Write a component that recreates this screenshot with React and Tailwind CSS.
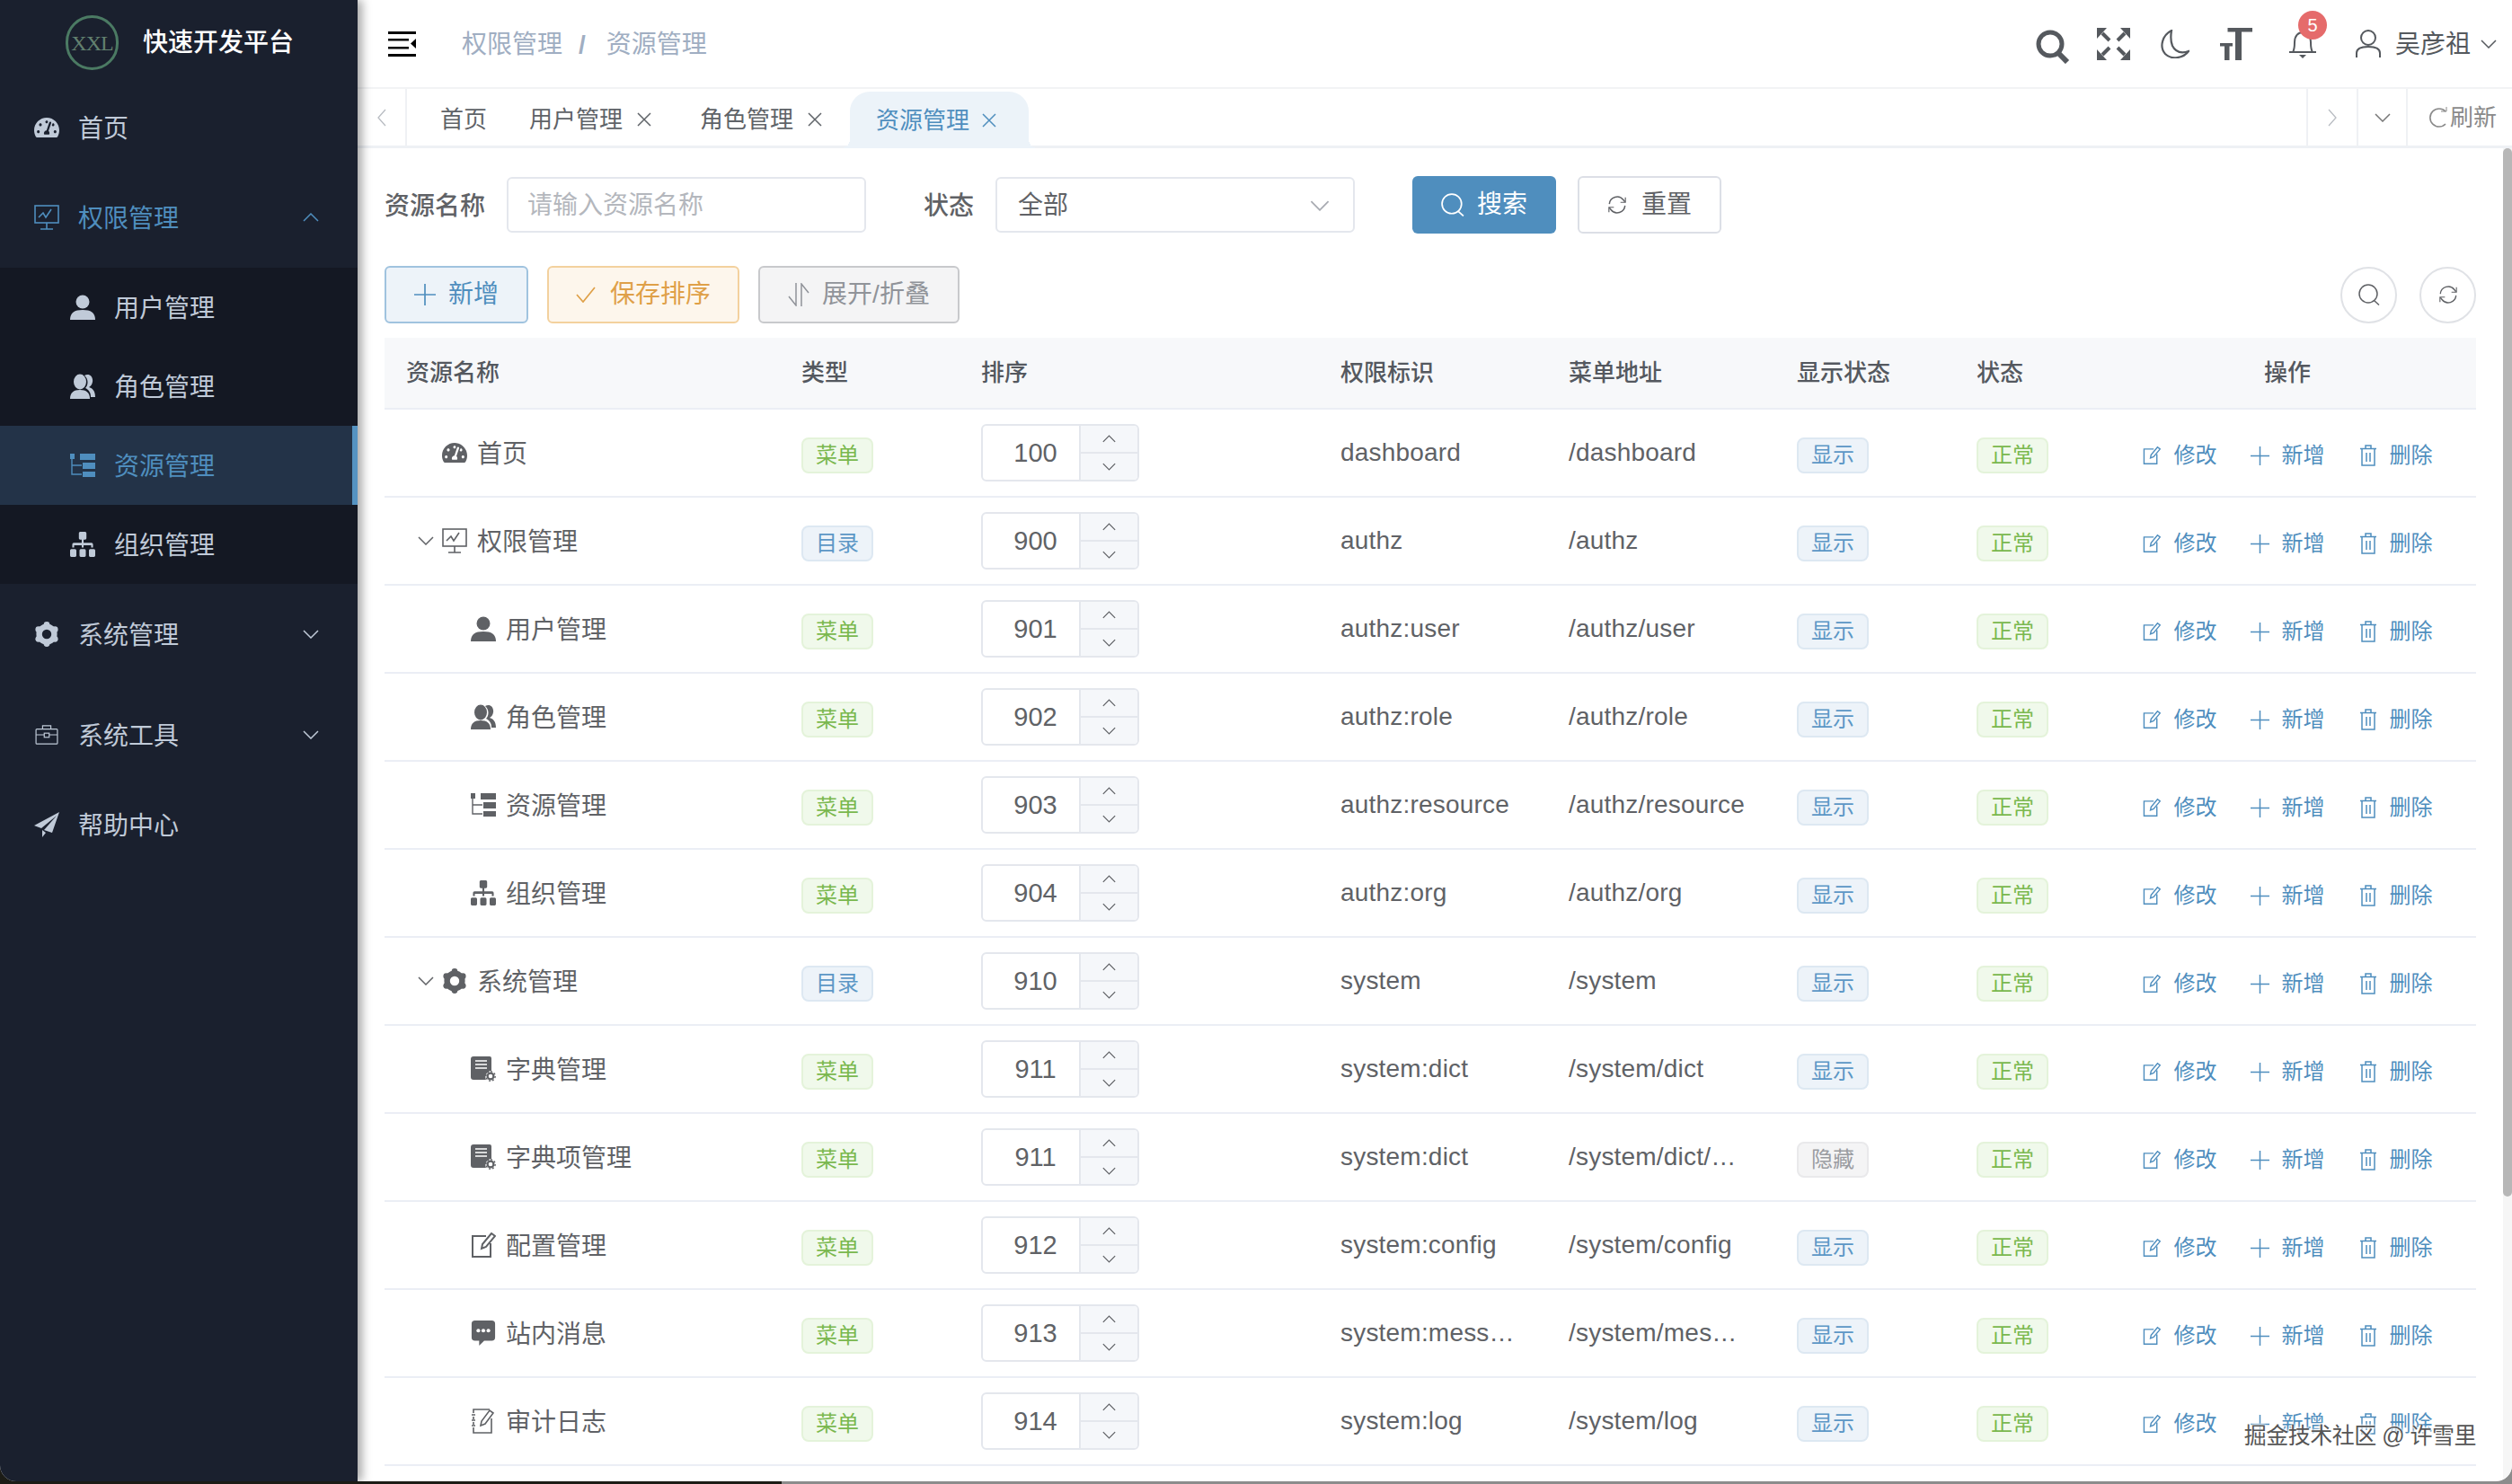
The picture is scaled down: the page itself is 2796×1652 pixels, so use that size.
import React from "react";
import { FaTachometerAlt, FaSitemap } from "react-icons/fa";

const Chevron = ({ dir = "down", className = "w-[18px] h-[10px]" }) => (
  <svg viewBox="0 0 18 10" className={className} fill="none" stroke="currentColor" strokeWidth="1.5">
    {dir === "down" ? <path d="M1 1l8 8 8-8" /> : <path d="M1 9l8-8 8 8" />}
  </svg>
);
const ChevronSide = ({ dir }) => (
  <svg viewBox="0 0 10 20" className="w-[10px] h-[20px]" fill="none" stroke="currentColor" strokeWidth="1.3">
    {dir === "left" ? <path d="M9 1L1 10l8 9" /> : <path d="M1 1l8 9-8 9" />}
  </svg>
);
const XIcon = () => (
  <svg viewBox="0 0 16 16" className="w-[16px] h-[16px]" fill="none" stroke="currentColor" strokeWidth="1.5"><path d="M1 1l14 14M15 1L1 15" /></svg>
);
const Gauge = ({ className }) => <FaTachometerAlt className={className} />;
const UserSolid = ({ className }) => (
  <svg viewBox="0 0 28 28" className={className} fill="currentColor"><circle cx="14" cy="8" r="7.5" /><path d="M0 28c0-8 5-11 14-11s14 3 14 11z" /></svg>
);
const UsersSolid = ({ className }) => (
  <svg viewBox="0 0 28 28" className={className} fill="currentColor">
    <path d="M16 2c5-3 10 1 9 7-.4 3-2 5-4 6 3 1 7 3 7 11h-5c0-5-2-8-6-10 3-3 4-10-1-14z" />
    <ellipse cx="11" cy="9" rx="7" ry="8.5" /><path d="M0 28c0-7 4-10 11-10s11 3 11 10z" />
  </svg>
);
const TreeIcon = ({ className }) => (
  <svg viewBox="0 0 28 26" className={className} fill="currentColor">
    <rect x="0" y="0" width="5" height="6" /><rect x="11" y="0" width="17" height="7" />
    <rect x="14" y="10" width="14" height="7" /><rect x="14" y="20" width="14" height="6" />
    <path d="M2 6v17h11M2 13h11" fill="none" stroke="currentColor" strokeWidth="1.4" />
  </svg>
);
const Sitemap = ({ className }) => <FaSitemap className={className} preserveAspectRatio="none" />;
const MonitorIcon = ({ className }) => (
  <svg viewBox="0 0 28 28" className={className} fill="none" stroke="currentColor" strokeWidth="1.6">
    <rect x="1" y="1" width="26" height="19" /><path d="M5 14l5-5 3 5 6-9M14 20v7M7 27h14" />
  </svg>
);
const GearIcon = ({ className }) => (
  <svg viewBox="0 0 28 28" className={className} fill="currentColor">
    <circle cx="14" cy="14" r="8.4" fill="none" stroke="currentColor" strokeWidth="6.4" />
    {[0, 60, 120, 180, 240, 300].map((a) => (
      <circle key={a} r="3.4" cx={14 + 10.6 * Math.sin((a * Math.PI) / 180)} cy={14 - 10.6 * Math.cos((a * Math.PI) / 180)} />
    ))}
  </svg>
);
const BriefcaseIcon = ({ className }) => (
  <svg viewBox="0 0 28 24" className={className} fill="none" stroke="currentColor" strokeWidth="1.3">
    <rect x="1" y="5" width="26" height="18" rx="1" /><path d="M9 5V1h10v4M1 12h10M17 12h10" /><rect x="11" y="10" width="6" height="5" />
  </svg>
);
const PlaneIcon = ({ className }) => (
  <svg viewBox="0 0 28 28" className={className} fill="currentColor">
    <path d="M28 0L0 15l8 3L25 4 11 20l9 3zM9 20v8l4-5z" />
  </svg>
);
const DictIcon = ({ className }) => (
  <svg viewBox="0 0 28 28" className={className}>
    <path d="M3 0h18a2 2 0 012 2v14a7 7 0 00-6 10H3a3 3 0 01-3-3V3a3 3 0 013-3z" fill="currentColor" />
    <path d="M5 5h13M5 9h13M5 13h13" stroke="#fff" strokeWidth="1.6" />
    <circle cx="22" cy="22" r="3.4" fill="none" stroke="currentColor" strokeWidth="2.2" />
    <circle cx="22" cy="22" r="5.2" fill="none" stroke="currentColor" strokeWidth="1.4" strokeDasharray="2 2" />
  </svg>
);
const EditIcon = ({ className, sw = 2 }) => (
  <svg viewBox="0 0 28 28" className={className} fill="none" stroke="currentColor" strokeWidth={sw}>
    <path d="M17 4H2v23h20V12" /><path d="M12 18l1-5L23 1l4 3-10 12z" />
  </svg>
);
const CommentIcon = ({ className }) => (
  <svg viewBox="0 0 28 30" className={className}>
    <path d="M4 0h20a4 4 0 014 4v16a4 4 0 01-4 4H15l-6 6v-6H4a4 4 0 01-4-4V4a4 4 0 014-4z" fill="currentColor" />
    <circle cx="8" cy="12" r="2.2" fill="#fff" /><circle cx="14" cy="12" r="2.2" fill="#fff" /><circle cx="20" cy="12" r="2.2" fill="#fff" />
  </svg>
);
const LogIcon = ({ className }) => (
  <svg viewBox="0 0 28 28" className={className} fill="none" stroke="currentColor" strokeWidth="1.6">
    <path d="M3 5V1h18M3 9v3M3 15v3M3 21v6h20V11M1 7h4M1 13h4M1 19h4" /><path d="M11 19l1-5L21 2l4 3-9 12z" />
  </svg>
);
const TrashIcon = ({ className }) => (
  <svg viewBox="0 0 20 24" className={className} fill="none" stroke="currentColor" strokeWidth="1.5">
    <path d="M1 4.500h18M7 4V1h6v3M3 5v18h14V5M8 9v10M12 9v10" />
  </svg>
);
const PlusIcon = ({ className }) => (
  <svg viewBox="0 0 24 24" className={className} fill="none" stroke="currentColor" strokeWidth="1.7"><path d="M12 0v24M0 12h24" /></svg>
);
const SearchThin = ({ className, sw = 1.6 }) => (
  <svg viewBox="0 0 24 24" className={className} fill="none" stroke="currentColor" strokeWidth={sw}>
    <circle cx="11" cy="11" r="10" /><path d="M17.500 18.500L23 23.500" />
  </svg>
);
const RefreshIcon = ({ className, sw = 1.6 }) => (
  <svg viewBox="0 0 24 24" className={className} fill="none" stroke="currentColor" strokeWidth={sw}>
    <path d="M2.500 11a9.500 9.500 0 0117-5l2 2.500M21.500 13a9.500 9.500 0 01-17 5l-2-2.500" />
    <path d="M16 9h6V3M8 15H2v6" strokeWidth={sw * 0.8} />
  </svg>
);
const Hamburger = () => (
  <svg viewBox="0 0 31 28" className="w-[31px] h-[28px]" fill="#000">
    <rect width="31" height="3" /><rect y="8" width="23" height="2.500" /><rect y="17" width="23" height="2.500" /><rect y="25" width="31" height="3" />
    <path d="M31 8v11l-6-5.500z" />
  </svg>
);
const FullIcon = () => (
  <svg viewBox="0 0 37 36" className="w-[37px] h-[36px]" fill="#55595e">
    <path d="M0 0h11L0 12zM37 0H26l11 12zM0 36h11L0 24zM37 36H26l11-12z" />
    <path d="M6 6l8 8M31 6l-8 8M6 30l8-8M31 30l-8-8" stroke="#55595e" strokeWidth="4" />
  </svg>
);
const TextSize = () => (
  <svg viewBox="0 0 36 36" className="w-[36px] h-[36px]" fill="#55595e">
    <rect x="8.500" width="27.500" height="4.500" /><rect x="17" width="7" height="36" /><rect y="17" width="14" height="3.500" /><rect x="5" y="17" width="5.500" height="19" />
  </svg>
);

function SideItem({ icon, label, active, h = "h-[88px]", chevron }) {
  return (
    <div className={`flex items-center pl-[38px] pr-[43px] ${h} ${active ? "text-[#4f8ebe]" : "text-[#c0cad8]"}`}>
      <span className="w-[28px] flex justify-center">{icon}</span>
      <span className="ml-[21px] pt-[4px] text-[28px] leading-none">{label}</span>
      {chevron && <span className="ml-auto"><Chevron dir={chevron} /></span>}
    </div>
  );
}
function SubItem({ icon, label, active }) {
  return (
    <div className={`flex items-center h-[88px] pl-[78px] ${active ? "bg-[#233348] text-[#4f8ebe] border-r-[6px] border-[#5593c2]" : "text-[#c0cad8]"}`}>
      <span className="w-[28px] flex justify-center">{icon}</span>
      <span className="ml-[21px] pt-[4px] text-[28px] leading-none">{label}</span>
    </div>
  );
}

function Sidebar() {
  return (
    <aside className="relative z-10 w-[398px] shrink-0 bg-[#1a202e] shadow-[5px_0_10px_rgba(0,0,0,0.35)]">
      <div className="h-[98px] flex items-center pl-[73px] pb-[3px]">
        <div className="w-[59px] h-[61px] rounded-full border-[3px] border-[#4b7a63] flex items-center justify-center text-[24px] leading-none tracking-[-1px] text-[#62806f] [font-family:'Liberation_Serif',serif]">XXL</div>
        <span className="ml-[27px] text-[28px] leading-none font-medium text-white">快速开发平台</span>
      </div>
      <SideItem icon={<Gauge className="w-[28px] h-[28px]" />} label="首页" />
      <SideItem h="h-[112px]" active icon={<MonitorIcon className="w-[28px] h-[28px]" />} label="权限管理" chevron="up" />
      <div className="bg-[#141823]">
        <SubItem icon={<UserSolid className="w-[28px] h-[28px]" />} label="用户管理" />
        <SubItem icon={<UsersSolid className="w-[28px] h-[28px]" />} label="角色管理" />
        <SubItem active icon={<TreeIcon className="w-[28px] h-[26px]" />} label="资源管理" />
        <SubItem icon={<Sitemap className="w-[28px] h-[28px]" />} label="组织管理" />
      </div>
      <SideItem h="h-[112px]" icon={<GearIcon className="w-[28px] h-[28px]" />} label="系统管理" chevron="down" />
      <SideItem h="h-[112px]" icon={<BriefcaseIcon className="w-[26px] h-[22px]" />} label="系统工具" chevron="down" />
      <SideItem icon={<PlaneIcon className="w-[28px] h-[28px]" />} label="帮助中心" />
    </aside>
  );
}

function Header() {
  return (
    <header className="h-[99px] shrink-0 flex items-center border-b-2 border-[#f2f3f5] pr-[17px]">
      <span className="ml-[34px]"><Hamburger /></span>
      <div className="ml-[51px] pt-[2px] flex items-center text-[28px] leading-none text-[#a0aec2]">
        <span>权限管理</span>
        <span className="ml-[18px] mr-[23px] font-semibold">/</span>
        <span>资源管理</span>
      </div>
      <div className="ml-auto flex items-center text-[#55595e]">
        <svg viewBox="0 0 38 38" className="w-[38px] h-[38px] mt-[6px]" fill="none" stroke="#55595e" strokeWidth="5">
          <circle cx="16" cy="16" r="13" /><path d="M25 26l10 10" strokeWidth="6" />
        </svg>
        <span className="ml-[30px]"><FullIcon /></span>
        <svg viewBox="0 0 33 32" className="ml-[33px] w-[33px] h-[32px]" fill="none" stroke="#55595e" strokeWidth="2.2">
          <path d="M13 1C3 6-1 19 6 27c7 7 20 5 26-3-9 3-15 0-18-6-2-5-2-11-1-17z" />
        </svg>
        <span className="ml-[34px]"><TextSize /></span>
        <span className="relative ml-[40px] w-[32px] h-[33px]">
          <svg viewBox="0 0 32 33" className="w-[32px] h-[33px]" fill="none" stroke="#55595e" strokeWidth="2">
            <path d="M1 26h30M5 26c2-3 2-6 2-11 0-7 4-11 9-11s9 4 9 11c0 5 0 8 2 11" /><path d="M12 29h8l-4 4z" fill="#55595e" stroke="none" />
          </svg>
          <span className="absolute left-[11px] -top-[20px] w-[32px] h-[32px] rounded-full bg-[#e56b6b] text-white text-[20px] leading-[32px] text-center">5</span>
        </span>
        <svg viewBox="0 0 28 31" className="ml-[43px] w-[28px] h-[31px]" fill="none" stroke="#55595e" strokeWidth="2">
          <circle cx="14" cy="9" r="8" /><path d="M1 31v-5c0-5 4-7 13-7s13 2 13 7v5" />
        </svg>
        <span className="ml-[16px] w-[86px] pt-[3px] text-[28px] leading-none">吴彦祖</span>
        <span className="ml-[9px]"><Chevron /></span>
      </div>
    </header>
  );
}

function TabsBar() {
  return (
    <div className="h-[66px] shrink-0 flex items-stretch border-b-[3px] border-[#eef1f5] text-[26px] leading-none text-[#5f6368]">
      <div className="w-[55px] flex items-center justify-center border-r-2 border-[#eff1f4] text-[#b8bcc2]"><ChevronSide dir="left" /></div>
      <div className="flex items-center ml-[37px] pt-[4px]">首页</div>
      <div className="flex items-center ml-[47px] pt-[4px]">用户管理<span className="ml-[16px]"><XIcon /></span></div>
      <div className="flex items-center ml-[54px] pt-[4px]">角色管理<span className="ml-[16px]"><XIcon /></span></div>
      <div className="relative flex items-center ml-[31px] mt-[3px] -mb-[3px] pl-[29px] pr-[36px] rounded-t-[22px] bg-[#ecf3f9] text-[#4f8ebe] before:absolute before:bottom-0 before:-left-[10px] before:w-[10px] before:h-[10px] before:bg-[radial-gradient(circle_at_0_0,transparent_10px,#ecf3f9_10px)] after:absolute after:bottom-0 after:-right-[10px] after:w-[10px] after:h-[10px] after:bg-[radial-gradient(circle_at_100%_0,transparent_10px,#ecf3f9_10px)]">
        资源管理<span className="ml-[14px]"><XIcon /></span>
      </div>
      <div className="ml-auto w-[56px] flex items-center justify-center border-l-2 border-[#eff1f4] text-[#b8bcc2]"><ChevronSide dir="right" /></div>
      <div className="w-[55px] flex items-center justify-center border-l-2 border-[#eff1f4] text-[#777]"><Chevron /></div>
      <div className="w-[118px] flex items-center pl-[24px] border-l-2 border-[#eff1f4] text-[#8a8a8a]">
        <svg viewBox="0 0 20 24" className="w-[20px] h-[24px]" fill="none" stroke="currentColor" strokeWidth="1.6"><path d="M18 5a10 10 0 100 14" /><path d="M13 5h6V0" strokeWidth="1" /></svg>
        <span className="ml-[3px]">刷新</span>
      </div>
    </div>
  );
}

function SearchForm() {
  return (
    <div className="flex items-center h-[64px] text-[28px] leading-none">
      <label className="w-[112px] pt-[3px] font-medium text-[#606266]">资源名称</label>
      <div className="ml-[24px] w-[400px] h-[62px] flex items-center pt-[2px] px-[21px] rounded-[6px] border-2 border-[#e4e7ed] bg-white text-[#b4b7bd]">请输入资源名称</div>
      <label className="ml-[64px] w-[56px] pt-[3px] font-medium text-[#606266]">状态</label>
      <div className="ml-[24px] w-[400px] h-[62px] flex items-center justify-between pt-[2px] pl-[23px] pr-[26px] rounded-[6px] border-2 border-[#e4e7ed] bg-white text-[#606266]">
        <span>全部</span><span className="text-[#a8abb2]"><Chevron className="w-[22px] h-[12px]" /></span>
      </div>
      <button className="ml-[64px] w-[160px] h-[64px] flex items-center justify-center gap-[14px] rounded-[6px] bg-[#4f8ebe] text-white text-[28px]">
        <SearchThin className="w-[26px] h-[26px]" />搜索
      </button>
      <button className="ml-[24px] w-[160px] h-[64px] flex items-center justify-center gap-[16px] rounded-[6px] border-2 border-[#dcdfe6] bg-white text-[#606266] text-[28px]">
        <RefreshIcon className="w-[22px] h-[22px]" />重置
      </button>
    </div>
  );
}

function Toolbar() {
  const base = "h-[64px] flex items-center justify-center rounded-[6px] border-2 text-[28px] leading-none";
  return (
    <div className="mt-[36px] flex items-center">
      <button className={`${base} w-[160px] gap-[14px] bg-[#edf3f9] border-[#a0c3df] text-[#4f8ebe]`}><PlusIcon className="w-[24px] h-[24px]" />新增</button>
      <button className={`${base} ml-[21px] w-[214px] gap-[16px] bg-[#fdf6ec] border-[#f3d19e] text-[#dfa048]`}>
        <svg viewBox="0 0 22 18" className="w-[22px] h-[18px]" fill="none" stroke="currentColor" strokeWidth="1.700"><path d="M1 9l7 8L21 1" /></svg>保存排序
      </button>
      <button className={`${base} ml-[21px] w-[224px] gap-[14px] bg-[#f4f4f5] border-[#c8c9cc] text-[#909399]`}>
        <svg viewBox="0 0 24 26" className="w-[24px] h-[26px]" fill="none" stroke="currentColor" strokeWidth="1.500"><path d="M9 0v25L1 15M15 26V1l8 10" /></svg>展开/折叠
      </button>
      <div className="ml-auto flex items-center gap-[25px] text-[#606266]">
        <span className="w-[63px] h-[63px] rounded-full border-2 border-[#e0e2e6] flex items-center justify-center"><SearchThin className="w-[24px] h-[24px]" sw={1.5} /></span>
        <span className="w-[63px] h-[63px] rounded-full border-2 border-[#e0e2e6] flex items-center justify-center"><RefreshIcon className="w-[22px] h-[22px]" sw={1.5} /></span>
      </div>
    </div>
  );
}

function Tag({ kind, children }) {
  const c = {
    green: "bg-[#f0f9eb] border-[#e4f3da] text-[#7ab84e]",
    blue: "bg-[#edf3f9] border-[#dde8f2] text-[#5c97c6]",
    gray: "bg-[#f4f4f5] border-[#e9e9eb] text-[#9a9ca1]",
  }[kind];
  return <span className={`mt-[6px] w-[80px] h-[40px] flex items-center justify-center rounded-[8px] border-2 text-[24px] leading-none ${c}`}>{children}</span>;
}

function NumberBox({ value }) {
  return (
    <div className="w-[176px] h-[64px] flex rounded-[6px] border-2 border-[#e4e7ed] overflow-hidden">
      <div className="w-[107px] pl-[10px] flex items-center justify-center text-[29px] leading-none text-[#606266]">{value}</div>
      <div className="flex-1 flex flex-col border-l-2 border-[#e4e7ed] bg-[#f5f7fa] text-[#606266]">
        <div className="flex-1 flex items-center justify-center border-b-2 border-[#e4e7ed]"><Chevron dir="up" className="w-[15px] h-[9px]" /></div>
        <div className="flex-1 flex items-center justify-center"><Chevron className="w-[15px] h-[9px]" /></div>
      </div>
    </div>
  );
}

function Ops() {
  const item = "flex items-center text-[24px] leading-none";
  return (
    <div className="mt-[6px] flex items-center justify-center text-[#4f8ebe]">
      <span className={item}><EditIcon className="w-[20px] h-[22px]" /><span className="ml-[15px]">修改</span></span>
      <span className={`${item} ml-[37px]`}><PlusIcon className="w-[21px] h-[21px]" /><span className="ml-[14px]">新增</span></span>
      <span className={`${item} ml-[38px]`}><TrashIcon className="w-[20px] h-[24px]" /><span className="ml-[14px]">删除</span></span>
    </div>
  );
}

const ic = "w-[28px] h-[28px]";
const rows = [
  { n: "首页", i: <Gauge className={ic} />, l: 0, t: "菜单", o: 100, p: "dashboard", u: "/dashboard" },
  { n: "权限管理", i: <MonitorIcon className={ic} />, l: 0, c: 1, t: "目录", o: 900, p: "authz", u: "/authz" },
  { n: "用户管理", i: <UserSolid className={ic} />, l: 1, t: "菜单", o: 901, p: "authz:user", u: "/authz/user" },
  { n: "角色管理", i: <UsersSolid className={ic} />, l: 1, t: "菜单", o: 902, p: "authz:role", u: "/authz/role" },
  { n: "资源管理", i: <TreeIcon className={ic} />, l: 1, t: "菜单", o: 903, p: "authz:resource", u: "/authz/resource" },
  { n: "组织管理", i: <Sitemap className={ic} />, l: 1, t: "菜单", o: 904, p: "authz:org", u: "/authz/org" },
  { n: "系统管理", i: <GearIcon className={ic} />, l: 0, c: 1, t: "目录", o: 910, p: "system", u: "/system" },
  { n: "字典管理", i: <DictIcon className={ic} />, l: 1, t: "菜单", o: 911, p: "system:dict", u: "/system/dict" },
  { n: "字典项管理", i: <DictIcon className={ic} />, l: 1, t: "菜单", o: 911, p: "system:dict", u: "/system/dict/meta", hide: 1 },
  { n: "配置管理", i: <EditIcon className={ic} />, l: 1, t: "菜单", o: 912, p: "system:config", u: "/system/config" },
  { n: "站内消息", i: <CommentIcon className={ic} />, l: 1, t: "菜单", o: 913, p: "system:message", u: "/system/message" },
  { n: "审计日志", i: <LogIcon className={ic} />, l: 1, t: "菜单", o: 914, p: "system:log", u: "/system/log" },
];

const th = "pl-[24px] text-left font-medium";
function ResourceTable() {
  return (
    <table className="mt-[16px] w-[2328px] table-fixed border-collapse text-[28px] leading-none text-[#606266]">
      <colgroup>
        <col className="w-[440px]" /><col className="w-[200px]" /><col className="w-[400px]" /><col className="w-[254px]" /><col className="w-[254px]" /><col className="w-[200px]" /><col className="w-[160px]" /><col className="w-[420px]" />
      </colgroup>
      <thead>
        <tr className="h-[79px] bg-[#f7f8fa] border-b-2 border-[#ebeef5] text-[26px] text-[#54585f]">
          <th className={th}>资源名称</th><th className={th}>类型</th><th className={th}>排序</th><th className={th}>权限标识</th><th className={th}>菜单地址</th><th className={th}>显示状态</th><th className={th}>状态</th>
          <th className="text-center font-medium">操作</th>
        </tr>
      </thead>
      <tbody>
        {rows.map((r, idx) => (
          <tr key={idx} className="h-[98px] border-b-2 border-[#ebeef5]">
            <td className="pl-[24px]">
              <div className={`flex items-center ${r.l ? "pl-[72px]" : "pl-[40px]"} relative`}>
                {r.c && <span className="absolute left-[13px] text-[#606266]"><Chevron className="w-[18px] h-[10px]" /></span>}
                <span className="w-[28px] flex justify-center text-[#5f6165]">{r.i}</span>
                <span className="ml-[11px] pt-[4px]">{r.n}</span>
              </div>
            </td>
            <td className="pl-[24px]"><div className="flex"><Tag kind={r.t === "目录" ? "blue" : "green"}>{r.t}</Tag></div></td>
            <td className="pl-[24px]"><NumberBox value={r.o} /></td>
            <td className="pl-[24px] pr-[24px] truncate tracking-[0.2px]">{r.p}</td>
            <td className="pl-[24px] pr-[32px] truncate tracking-[0.2px]">{r.u}</td>
            <td className="pl-[24px]"><div className="flex"><Tag kind={r.hide ? "gray" : "blue"}>{r.hide ? "隐藏" : "显示"}</Tag></div></td>
            <td className="pl-[24px]"><div className="flex"><Tag kind="green">正常</Tag></div></td>
            <td><Ops /></td>
          </tr>
        ))}
      </tbody>
    </table>
  );
}

export default function App() {
  return (
    <div className="relative w-[2796px] h-[1652px] overflow-hidden bg-[linear-gradient(90deg,#1c1c16_870px,#8c8c8c_870px)] [font-family:'Liberation_Sans','Noto_Sans_CJK_SC',sans-serif]">
      <div className="h-[1649px] flex overflow-hidden rounded-b-[18px] bg-white">
        <Sidebar />
        <main className="flex-1 min-w-0 flex flex-col">
          <Header />
          <TabsBar />
          <div className="relative flex-1 min-h-0 flex overflow-hidden">
            <div className="flex-1 min-w-0 pt-[31px] pl-[30px] pr-[30px]">
              <SearchForm />
              <Toolbar />
              <ResourceTable />
            </div>
            <div className="w-[10px] shrink-0 bg-[#f6f6f6]">
              <div className="h-[1167px] rounded-[5px] bg-[#b7b7b7]" />
            </div>
            <span className="absolute right-[40px] bottom-[38px] text-[25px] leading-none tracking-[-0.5px] text-[#555] [text-shadow:0_0_3px_#fff,0_0_3px_#fff,0_0_3px_#fff]">掘金技术社区 @ 许雪里</span>
          </div>
        </main>
      </div>
    </div>
  );
}
